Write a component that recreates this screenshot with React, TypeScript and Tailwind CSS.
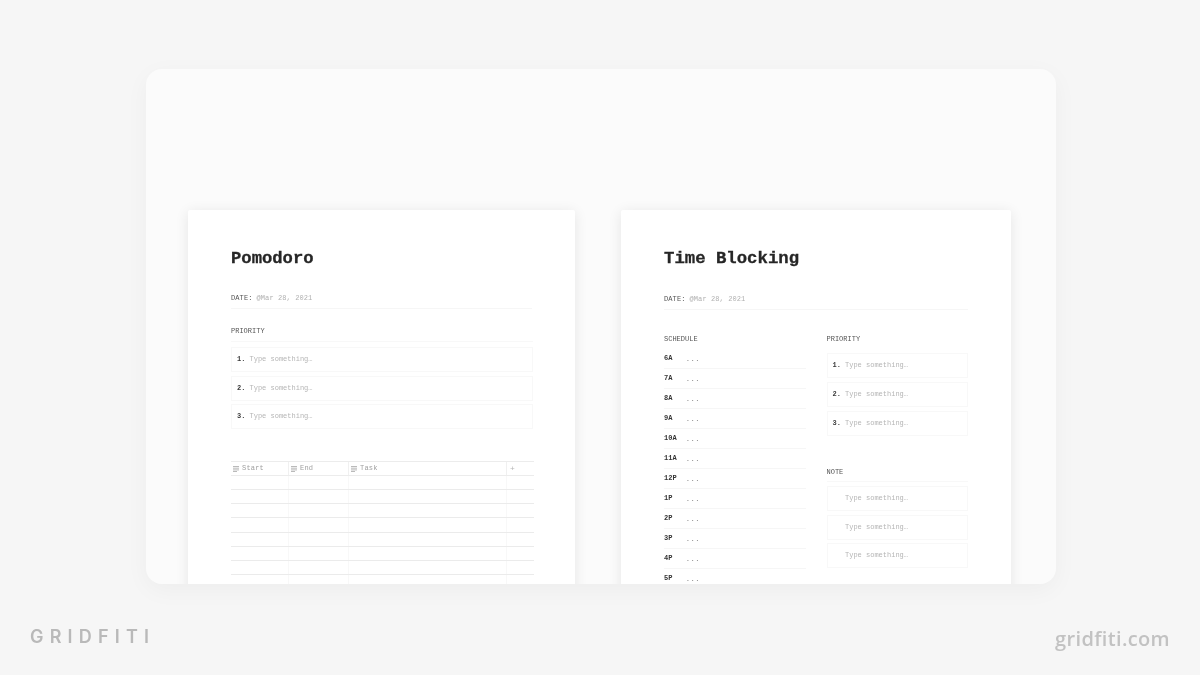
import React from "react";

const mono = "font-['Liberation_Mono',monospace]";

function Box({ n, cls = "" }: { n?: string; cls?: string }) {
  return (
    <div className={`flex h-[25px] items-center border border-[#f8f8f8] ${cls}`}>
      <span className={`${n ? "" : "invisible"} ml-[5px] w-[12.5px] text-[7px] font-bold text-[#3a3a3a]`}>{n ?? "1."}</span>
      <span className="text-[7px] text-[#b5b5b5]">Type something…</span>
    </div>
  );
}

function ListIcon() {
  return (
    <svg width="6" height="6" viewBox="0 0 6 6" className="mr-[3px] shrink-0">
      <path d="M0 .5h6M0 2.2h6M0 3.9h6M0 5.5h4" stroke="#a8a8a8" strokeWidth="0.8" fill="none" />
    </svg>
  );
}

function Head({ w, label, icon, last }: { w: string; label: string; icon: React.ReactNode; last?: boolean }) {
  return (
    <div className={`flex h-full items-center pl-[2px] ${w} ${last ? "" : "border-r border-[#f0f0f0]"}`}>
      {icon}
      <span className="text-[7px] tracking-[0.2px] text-[#a0a0a0]">{label}</span>
    </div>
  );
}

function TableRow() {
  return (
    <div className="flex h-[14.15px] border-b border-[#ebebeb]">
      <div className="w-[58px] border-r border-[#f8f8f8]" />
      <div className="w-[60px] border-r border-[#f8f8f8]" />
      <div className="w-[158px] border-r border-[#f8f8f8]" />
    </div>
  );
}

function Date_({ mt }: { mt: string }) {
  return (
    <div className={`${mt} flex h-[19px] items-center border-b border-[#f6f6f6] pb-[1px] text-[7px] tracking-[0.1px]`}>
      <span className="text-[#555]">DATE:</span>
      <span className="ml-[4px] text-[#b0b0b0]">@Mar 28, 2021</span>
    </div>
  );
}

const hours = ["6A", "7A", "8A", "9A", "10A", "11A", "12P", "1P", "2P", "3P", "4P", "5P"];

export default function App() {
  return (
    <div className="h-[675px] w-[1200px] overflow-hidden bg-[#f6f6f6]">
      <div className={`${mono} ml-[146px] mt-[69px] flex h-[515px] w-[910px] gap-[46px] overflow-hidden rounded-[16px] bg-[#fbfbfb] pl-[42px] pt-[141px] shadow-[0_6px_24px_rgba(0,0,0,0.04)] blur-[0.35px]`}>
        {/* Pomodoro */}
        <div className="h-[400px] w-[387px] shrink-0 rounded-[2px] bg-white px-[43px] pt-[39px] shadow-[0_2px_14px_rgba(0,0,0,0.09)]">
          <div className="h-[20px] text-[17.2px] font-bold leading-[20px] text-[#262626] [-webkit-text-stroke:0.3px_#262626]">Pomodoro</div>
          <Date_ mt="mt-[21px]" />
          <div className="mt-[17px] h-[10px] text-[7px] leading-[10px] text-[#555]">PRIORITY</div>
          <div className="mt-[5px] flex w-[302px] flex-col gap-[3.5px] border-t border-[#f8f8f8] pt-[5px]">
            <Box n="1." />
            <Box n="2." />
            <Box n="3." />
          </div>
          <div className="mt-[32px] w-[303px]">
            <div className="flex h-[15px] border-y border-[#ececec]">
              <Head w="w-[58px]" label="Start" icon={<ListIcon />} />
              <Head w="w-[60px]" label="End" icon={<ListIcon />} />
              <Head w="w-[158px]" label="Task" icon={<ListIcon />} />
              <span className="pl-[3px] text-[8px] leading-[13px] text-[#b5b5b5]">+</span>
            </div>
            {Array.from({ length: 8 }).map((_, i) => (
              <TableRow key={i} />
            ))}
          </div>
        </div>

        {/* Time Blocking */}
        <div className="h-[400px] w-[390px] shrink-0 rounded-[2px] bg-white px-[43px] pt-[39px] shadow-[0_2px_14px_rgba(0,0,0,0.09)]">
          <div className="h-[20px] text-[17.3px] font-bold leading-[20px] tracking-[0.02px] text-[#262626] [-webkit-text-stroke:0.3px_#262626]">Time Blocking</div>
          <Date_ mt="mt-[22px]" />
          <div className="mt-[24px] flex gap-[20px]">
            <div className="w-[143px]">
              <div className="h-[10px] text-[7px] leading-[10px] text-[#555]">SCHEDULE</div>
              <div className="mt-[5px]">
                {hours.map((h) => (
                  <div key={h} className="flex h-[20px] items-center border-b border-[#f6f6f6]">
                    <span className="w-[21.5px] text-[7px] font-bold text-[#333]">{h}</span>
                    <span className="text-[8px] text-[#8c8c8c]">...</span>
                  </div>
                ))}
              </div>
            </div>
            <div className="ml-[1px] w-[143px]">
              <div className="h-[10px] text-[7px] leading-[10px] text-[#555]">PRIORITY</div>
              <div className="mt-[9px] flex flex-col gap-[4px]">
                <Box n="1." />
                <Box n="2." />
                <Box n="3." />
              </div>
              <div className="mt-[31px] h-[10px] text-[7px] leading-[10px] text-[#555]">NOTE</div>
              <div className="mt-[4px] flex flex-col gap-[3.5px] border-t border-[#f8f8f8] pt-[4px]">
                <Box />
                <Box />
                <Box />
              </div>
            </div>
          </div>
        </div>
      </div>

      <div className="mx-[30px] mt-[41px] flex items-start justify-between blur-[0.35px]">
        <span className="font-['Inter',sans-serif] text-[18px] font-semibold leading-[24px] tracking-[6.2px] text-[#b9b9b9]">GRIDFITI</span>
        <span className="mt-[2px] font-['Open_Sans',sans-serif] text-[20px] font-semibold leading-[24px] tracking-[0.35px] text-[#c2c2c2]">gridfiti.com</span>
      </div>
    </div>
  );
}
